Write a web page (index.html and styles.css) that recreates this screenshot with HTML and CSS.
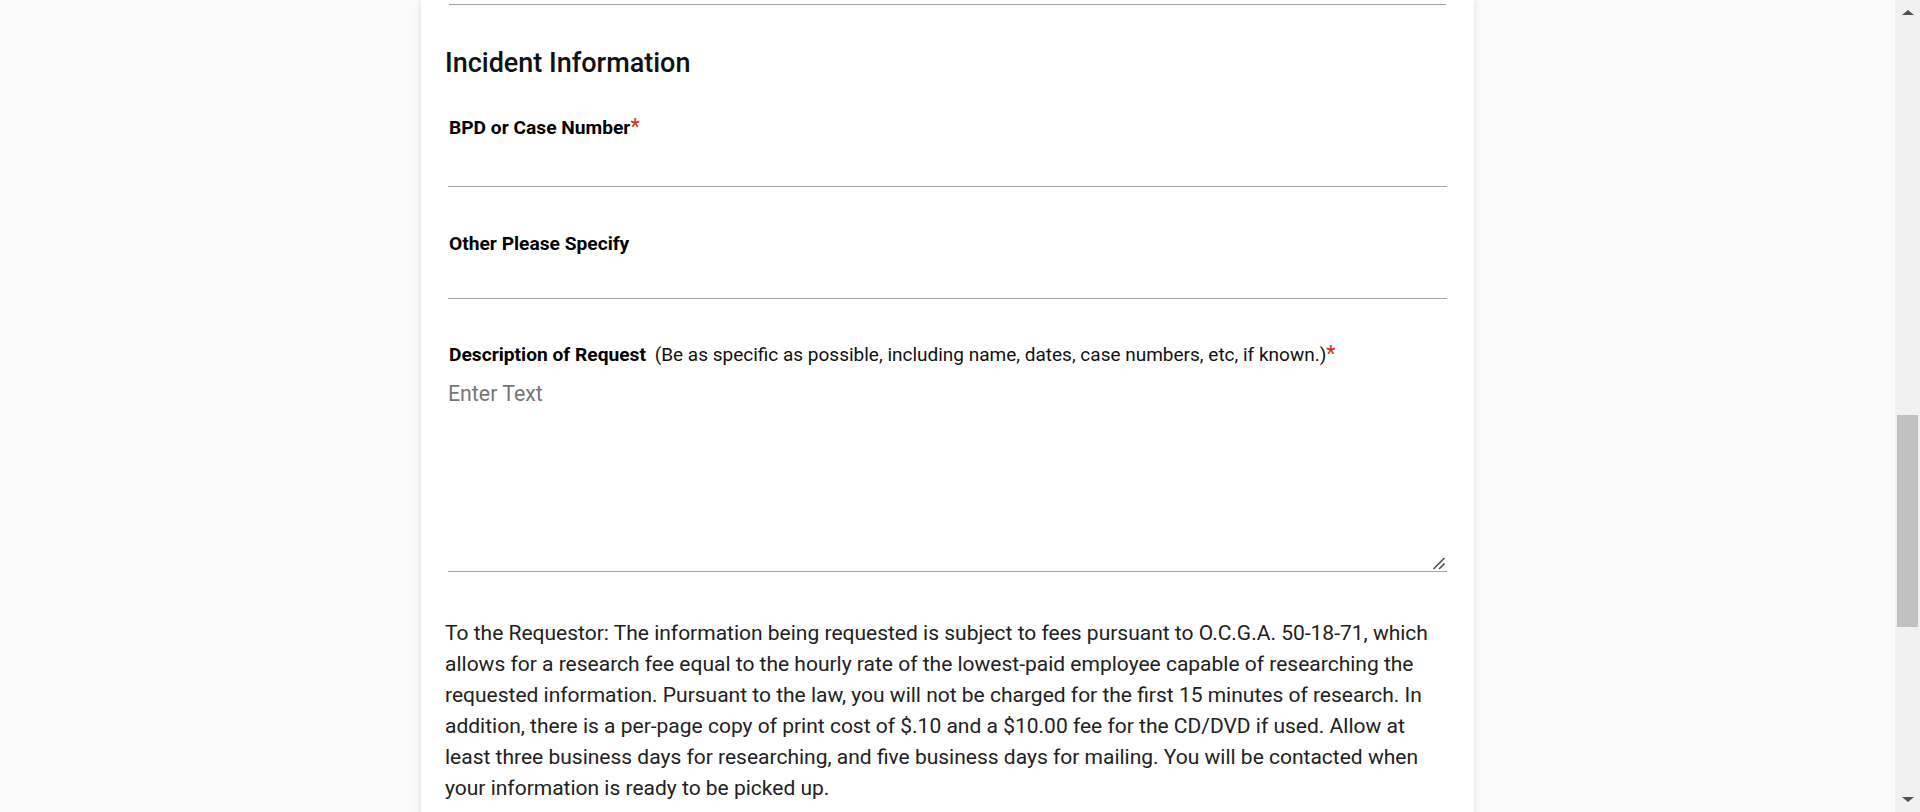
FILE: index.html
```html
<!DOCTYPE html>
<html lang="en">
<head>
<meta charset="utf-8">
<title>Incident Information</title>
<link rel="stylesheet" href="styles.css">
</head>
<body>
<div class="viewport">
  <main class="page">
    <section class="card">
      <div class="divider"></div>
      <h2 class="section-title">Incident Information</h2>
      <div class="field field-case">
        <label class="label" for="case">BPD or Case Number<span class="req">*</span></label>
        <input id="case" class="input input-case" type="text">
      </div>
      <div class="field field-other">
        <label class="label" for="other">Other Please Specify</label>
        <input id="other" class="input input-other" type="text">
      </div>
      <div class="field field-desc">
        <label class="label" for="desc">Description of Request <span class="hint">(Be as specific as possible, including name, dates, case numbers, etc, if known.)</span><span class="req">*</span></label>
        <textarea id="desc" class="textarea" placeholder="Enter Text"></textarea>
        <svg class="grip" width="14" height="14" viewBox="0 0 14 14" aria-hidden="true">
          <line x1="1.5" y1="13" x2="12.5" y2="2" stroke="#4d4d4d" stroke-width="1.6"/>
          <line x1="7" y1="13" x2="12.5" y2="7.5" stroke="#4d4d4d" stroke-width="1.6"/>
        </svg>
      </div>
      <p class="notice">To the Requestor: The information being requested is subject to fees pursuant to O.C.G.A. 50-18-71, which allows for a research fee equal to the hourly rate of the lowest-paid employee capable of researching the requested information. Pursuant to the law, you will not be charged for the first 15 minutes of research. In addition, there is a per-page copy of print cost of $.10 and a $10.00 fee for the CD/DVD if used. Allow at least three business days for researching, and five business days for mailing. You will be contacted when your information is ready to be picked up.</p>
    </section>
  </main>
  <div class="scrollbar">
    <div class="sb-btn"><span class="arrow-up"></span></div>
    <div class="sb-track"><div class="sb-thumb"></div></div>
    <div class="sb-btn"><span class="arrow-down"></span></div>
  </div>
</div>
</body>
</html>
```
FILE: styles.css
```css
html, body {
  margin: 0;
  padding: 0;
  height: 812px;
  overflow: hidden;
}
body {
  background: #fafafa;
  font-family: Roboto, "Liberation Sans", Arial, sans-serif;
  color: #000;
}
.viewport {
  display: flex;
  height: 812px;
}
.page {
  flex: 1;
  display: flex;
  justify-content: center;
  overflow: hidden;
}
.card {
  width: 1053px;
  box-sizing: border-box;
  padding: 0 24px;
  background: #fff;
  box-shadow: 0 0 7px rgba(0, 0, 0, 0.13);
  height: 900px;
}
.divider {
  margin: 4px 4px 0;
  height: 1px;
  background: #a0a0a0;
}
.section-title {
  margin: 42px 0 0;
  font-size: 27px;
  line-height: 32px;
  font-weight: 500;
  color: #111;
}
.field {
  margin: 0 3px;
  display: flex;
  flex-direction: column;
}
.field-case { margin-top: 37px; }
.field-other { margin-top: 45px; }
.field-desc {
  margin-top: 44px;
  position: relative;
}
.label {
  display: block;
  font-size: 19.2px;
  line-height: 24px;
  font-weight: 700;
  color: #000;
  padding-left: 1px;
}
.hint {
  font-weight: 400;
  font-size: 0.99em;
  margin-left: 4px;
  color: #111;
}
.req {
  color: #e2231a;
  font-weight: 400;
  font-size: 1.12em;
  line-height: 0;
}
.input {
  display: block;
  box-sizing: border-box;
  width: 100%;
  border: 0;
  border-bottom: 1px solid #a0a0a0;
  background: transparent;
  padding: 0;
  font: inherit;
  outline: none;
}
.input-case { height: 47px; }
.input-other { height: 43px; }
.textarea {
  display: block;
  box-sizing: border-box;
  width: 100%;
  height: 205px;
  border: 0;
  border-bottom: 1px solid #a0a0a0;
  padding: 15px 0 0;
  margin: 0;
  font-family: Roboto, "Liberation Sans", Arial, sans-serif;
  font-size: 21.3px;
  line-height: 24px;
  color: #222;
  background: #fff;
  outline: none;
  resize: none;
}
.textarea::placeholder {
  color: #767676;
}
.grip {
  position: absolute;
  right: 1px;
  bottom: 2px;
}
.notice {
  margin: 46px 0 0;
  font-size: 21px;
  line-height: 31px;
  color: #212121;
}
.scrollbar {
  width: 25px;
  flex: none;
  display: flex;
  flex-direction: column;
  background: #f1f1f1;
}
.sb-btn {
  height: 25px;
  flex: none;
  display: flex;
  align-items: center;
  justify-content: center;
}
.arrow-up {
  width: 0;
  height: 0;
  border-left: 6px solid transparent;
  border-right: 6px solid transparent;
  border-bottom: 5px solid #505050;
}
.arrow-down {
  width: 0;
  height: 0;
  border-left: 6px solid transparent;
  border-right: 6px solid transparent;
  border-top: 5px solid #505050;
}
.sb-track {
  flex: 1;
}
.sb-thumb {
  margin: 390px 2px 0;
  height: 212px;
  background: #c1c1c1;
}
```
